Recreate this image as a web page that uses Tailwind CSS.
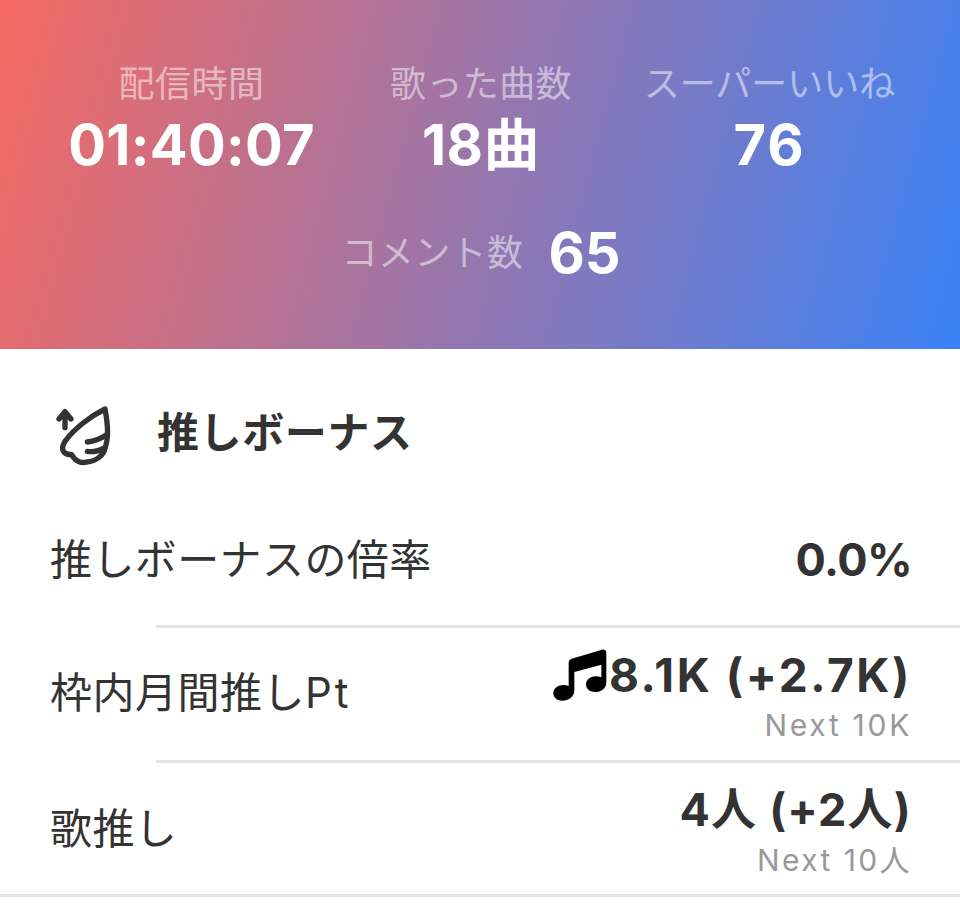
<!DOCTYPE html>
<html lang="ja">
<head>
<meta charset="UTF-8" />
<script src="https://cdn.jsdelivr.net/npm/@tailwindcss/browser@4"></script>
</head>
<body class="bg-white font-['Inter','Noto_Sans_CJK_JP',sans-serif] text-[#333]">
<div class="w-[960px] h-[922px] overflow-hidden">
  <section class="h-[349px] bg-[linear-gradient(105deg,#f56a62,#3b82f6)] text-white">
    <div class="flex pt-[60px]">
      <div class="w-[383px] flex flex-col items-center">
        <div class="text-[36px] leading-[48px] text-white/50 tracking-[0.5px]">配信時間</div>
        <div class="text-[56px] leading-[74px] font-bold tracking-[0.3px]">01:40:07</div>
      </div>
      <div class="w-[196px] flex flex-col items-center">
        <div class="text-[36px] leading-[48px] text-white/50 whitespace-nowrap tracking-[0.4px]">歌った曲数</div>
        <div class="text-[56px] leading-[74px] font-bold tracking-[0.5px]">18曲</div>
      </div>
      <div class="w-[381px] flex flex-col items-center">
        <div class="text-[36px] leading-[48px] text-white/50 whitespace-nowrap">スーパーいいね</div>
        <div class="text-[56px] leading-[74px] font-bold tracking-[2px]">76</div>
      </div>
    </div>
    <div class="flex justify-center items-center gap-[25px] mt-[36px] pl-[2px]">
      <span class="text-[36px] leading-[70px] text-white/50 tracking-[0.4px]">コメント数</span>
      <span class="text-[56px] leading-[70px] font-bold">65</span>
    </div>
  </section>
  <section>
    <div class="flex items-center h-[167px] pl-[40px]">
      <svg class="w-[90px] h-[80px] shrink-0" viewBox="0 0 270 240" fill="none" stroke="#333" stroke-width="16" stroke-linecap="round" stroke-linejoin="round">
        <path d="M75 104V62M57 78l18-22 18 22" />
        <path d="M195 48C150 70 100 110 75 145C60 170 70 185 95 185C105 205 125 212 140 207C170 205 192 185 195 165C205 140 205 100 195 48Z" />
        <path d="M142 147C160 145 185 135 200 125M142 175C160 178 180 172 194 165" />
      </svg>
      <h2 class="ml-[27px] text-[42px] font-bold tracking-[0.6px]">推しボーナス</h2>
    </div>
    <div class="flex items-center justify-between h-[109px] pl-[50px] pr-[48px] pb-[22px]">
      <span class="text-[42px] tracking-[0.4px]">推しボーナスの倍率</span>
      <span class="text-[45px] font-bold tracking-[-0.6px]">0.0%</span>
    </div>
    <div class="ml-[156px] h-[3px] bg-[#e5e5e5]"></div>
    <div class="flex items-center justify-between h-[132px] pl-[50px] pr-[48px]">
      <span class="text-[42px] tracking-[0.5px] mb-[4px]">枠内月間推し<span class="tracking-[3px]">Pt</span></span>
      <div class="flex flex-col items-end pt-[3px]">
        <div class="flex items-center leading-[58px]">
          <svg class="w-[90px] h-[70px] shrink-0 -my-[6px] -mr-[25px]" viewBox="0 0 270 210" fill="#000">
            <path d="M74 68C74 62 77 58 83 56L174 29C181 27 187 31 187 38V128C187 146 170 156 153 156C136 156 126 146 126 133C126 119 140 109 156 109C162 109 167 110 172 112V74L91 96V152C91 170 73 182 55 182C38 182 28 172 28 159C28 145 42 135 58 135C64 135 69 136 74 138Z" />
          </svg>
          <span class="text-[46px] font-bold tracking-[2.6px]">8.1K (+2.7K)</span>
        </div>
        <span class="text-[30px] leading-[42px] text-[#999] tracking-[2.7px]">Next 10K</span>
      </div>
    </div>
    <div class="ml-[156px] h-[3px] bg-[#e5e5e5]"></div>
    <div class="flex items-center justify-between h-[131px] pl-[50px] pr-[48px]">
      <span class="text-[42px] tracking-[0.4px]">歌推し</span>
      <div class="flex flex-col items-end pt-[4px]">
        <span class="text-[45px] leading-[58px] font-bold tracking-[1.2px]">4人 (+2人)</span>
        <span class="text-[30px] leading-[42px] text-[#999] tracking-[2.4px]">Next 10人</span>
      </div>
    </div>
    <div class="h-[3px] bg-[#e5e5e5]"></div>
  </section>
</div>
</body>
</html>
